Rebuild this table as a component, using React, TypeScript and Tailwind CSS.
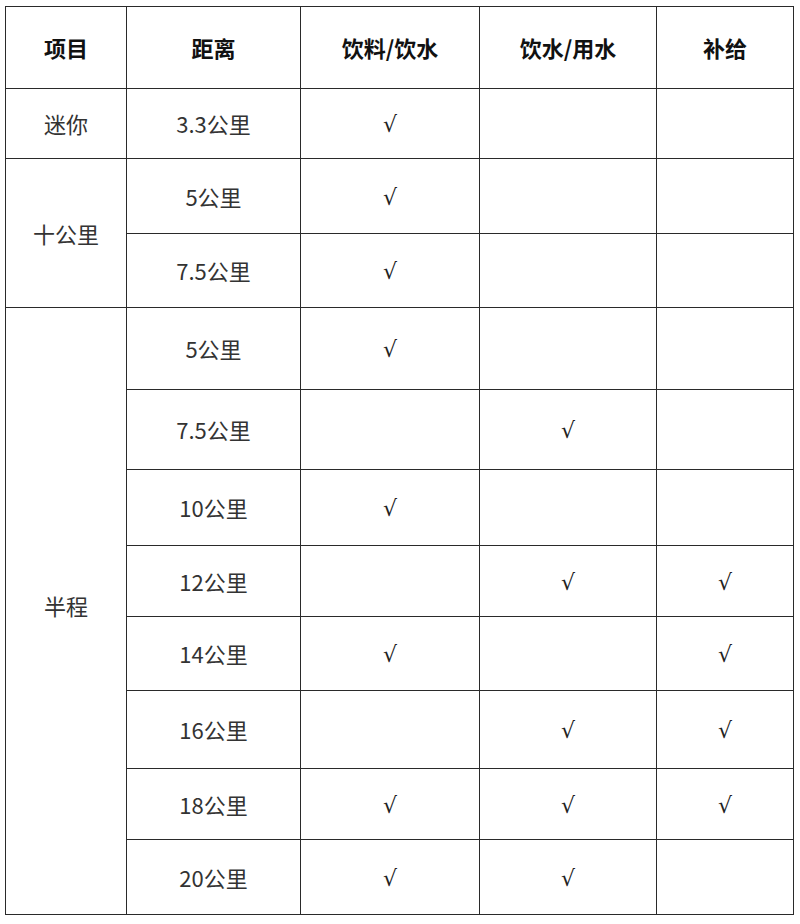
import React from "react";

type Row = { dist: string; drink: boolean; water: boolean; supply: boolean; h: string };

const groups: { name: string; pad?: string; rows: Row[] }[] = [
  { name: "迷你", rows: [{ dist: "3.3公里", drink: true, water: false, supply: false, h: "h-[70px]" }] },
  {
    name: "十公里",
    rows: [
      { dist: "5公里", drink: true, water: false, supply: false, h: "h-[75px]" },
      { dist: "7.5公里", drink: true, water: false, supply: false, h: "h-[74px]" },
    ],
  },
  {
    name: "半程",
    pad: "pb-[12px]",
    rows: [
      { dist: "5公里", drink: true, water: false, supply: false, h: "h-[82px]" },
      { dist: "7.5公里", drink: false, water: true, supply: false, h: "h-[80px]" },
      { dist: "10公里", drink: true, water: false, supply: false, h: "h-[76px]" },
      { dist: "12公里", drink: false, water: true, supply: true, h: "h-[71px]" },
      { dist: "14公里", drink: true, water: false, supply: true, h: "h-[74px]" },
      { dist: "16公里", drink: false, water: true, supply: true, h: "h-[78px]" },
      { dist: "18公里", drink: true, water: true, supply: true, h: "h-[71px]" },
      { dist: "20公里", drink: true, water: true, supply: false, h: "h-[75px]" },
    ],
  },
];

const cell = "border-[1.5px] border-[#2a2a2a] text-center align-middle p-0";

const Check = ({ on }: { on: boolean }) =>
  on ? (
    <span className="text-[22px] text-[#222]" style={{ fontFamily: '"DejaVu Sans", sans-serif' }}>
      √
    </span>
  ) : null;

export default function App() {
  return (
    <div
      className="w-[800px] h-[924px] bg-white pt-[6px] pl-[5px] text-[#333] text-[22px]"
      style={{ fontFamily: '"Noto Sans CJK SC", "Noto Sans", sans-serif' }}
    >
      <table className="border-collapse w-[788px] table-fixed">
        <colgroup>
          <col className="w-[121px]" />
          <col className="w-[174px]" />
          <col className="w-[179px]" />
          <col className="w-[177px]" />
          <col className="w-[137px]" />
        </colgroup>
        <thead>
          <tr className="h-[82px] font-bold text-[#111] text-[22px]">
            <th className={cell}>项目</th>
            <th className={cell}>距离</th>
            <th className={cell}>饮料/饮水</th>
            <th className={cell}>饮水/用水</th>
            <th className={cell}>补给</th>
          </tr>
        </thead>
        <tbody>
          {groups.map((g) =>
            g.rows.map((r, i) => (
              <tr key={g.name + r.dist} className={r.h}>
                {i === 0 && (
                  <td rowSpan={g.rows.length} className={`${cell} ${g.pad ?? ""}`}>
                    {g.name}
                  </td>
                )}
                <td className={cell}>{r.dist}</td>
                <td className={cell}>
                  <Check on={r.drink} />
                </td>
                <td className={cell}>
                  <Check on={r.water} />
                </td>
                <td className={cell}>
                  <Check on={r.supply} />
                </td>
              </tr>
            ))
          )}
        </tbody>
      </table>
    </div>
  );
}
